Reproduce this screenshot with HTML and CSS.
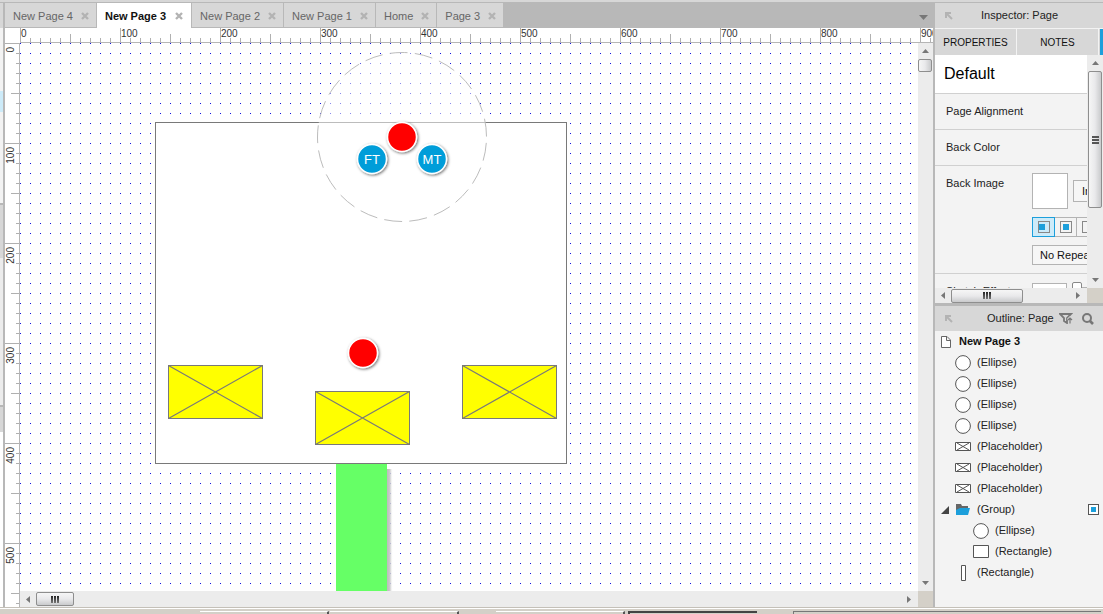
FILE: index.html
```html
<!DOCTYPE html>
<html lang="en">
<head>
<meta charset="utf-8">
<title>Page Editor</title>
<link rel="stylesheet" href="styles.css">
</head>
<body>
<div class="app">
  <div class="topline"></div>
  <div class="workspace">
    <div class="edge">
      <i class="edge-head"></i><i class="edge-plain"></i><i class="edge-selected"></i><i class="edge-fill"></i>
      <i class="edge-line"></i><i class="edge-head edge-tall"></i><i class="edge-middle"></i>
      <i class="edge-line"></i><i class="edge-head"></i><i class="edge-rest"></i>
    </div>

    <main class="editor">
      <nav class="tabs">
        <div class="tab"><span>New Page 4</span><button class="close" aria-label="Close New Page 4"><svg width="8" height="8"><path d="M1 1L7 7M7 1L1 7"/></svg></button></div>
        <div class="tab active"><span>New Page 3</span><button class="close" aria-label="Close New Page 3"><svg width="8" height="8"><path d="M1 1L7 7M7 1L1 7"/></svg></button></div>
        <div class="tab"><span>New Page 2</span><button class="close" aria-label="Close New Page 2"><svg width="8" height="8"><path d="M1 1L7 7M7 1L1 7"/></svg></button></div>
        <div class="tab"><span>New Page 1</span><button class="close" aria-label="Close New Page 1"><svg width="8" height="8"><path d="M1 1L7 7M7 1L1 7"/></svg></button></div>
        <div class="tab"><span>Home</span><button class="close" aria-label="Close Home"><svg width="8" height="8"><path d="M1 1L7 7M7 1L1 7"/></svg></button></div>
        <div class="tab"><span>Page 3</span><button class="close" aria-label="Close Page 3"><svg width="8" height="8"><path d="M1 1L7 7M7 1L1 7"/></svg></button></div>
        <button class="tab-menu" aria-label="All tabs"><svg width="9" height="5"><path d="M0 0H9L4.500 5Z" fill="#777"/></svg></button>
      </nav>

      <div class="stage">
        <svg class="ruler-top" width="100%" height="15">
          <defs><pattern id="ticksH" width="100" height="15" patternUnits="userSpaceOnUse">
            <path d="M.5 0V15M50.500 6V15M10.500 10V15M20.500 10V15M30.500 10V15M40.500 10V15M60.500 10V15M70.500 10V15M80.500 10V15M90.500 10V15" stroke="#b0b0b0"/>
          </pattern></defs>
          <rect width="100%" height="15" fill="url(#ticksH)"/>
          <path d="M0 14.500H3000" stroke="#b5b5b5"/>
          <g class="ruler-text">
            <text x="1" y="9">0</text><text x="101" y="9">100</text><text x="201" y="9">200</text><text x="301" y="9">300</text><text x="401" y="9">400</text>
            <text x="501" y="9">500</text><text x="601" y="9">600</text><text x="701" y="9">700</text><text x="801" y="9">800</text><text x="901" y="9">900</text>
          </g>
        </svg>

        <svg class="ruler-side" width="15" height="100%">
          <defs><pattern id="ticksV" width="15" height="100" patternUnits="userSpaceOnUse">
            <path d="M0 .5H15M6 50.500H15M11 10.500H15M11 20.500H15M11 30.500H15M11 40.500H15M11 60.500H15M11 70.500H15M11 80.500H15M11 90.500H15" stroke="#b0b0b0"/>
          </pattern></defs>
          <rect width="15" height="100%" fill="url(#ticksV)"/>
          <path d="M14.500 0V2000" stroke="#b5b5b5"/>
          <g class="ruler-text" text-anchor="end">
            <text transform="translate(9 4) rotate(-90)">0</text>
            <text transform="translate(9 104) rotate(-90)">100</text>
            <text transform="translate(9 204) rotate(-90)">200</text>
            <text transform="translate(9 304) rotate(-90)">300</text>
            <text transform="translate(9 404) rotate(-90)">400</text>
            <text transform="translate(9 504) rotate(-90)">500</text>
          </g>
        </svg>

        <div class="canvas">
          <svg width="100%" height="100%">
            <defs>
              <pattern id="grid" width="10" height="10" patternUnits="userSpaceOnUse"><rect width="1" height="1" fill="#1010e0"/></pattern>
              <filter id="drop" x="-30%" y="-30%" width="170%" height="170%"><feDropShadow dx="1" dy="1" stdDeviation="1.500" flood-color="#000" flood-opacity=".6"/></filter>
              <linearGradient id="fade"><stop offset="0" stop-color="#bbb"/><stop offset=".5" stop-color="#ccc"/><stop offset="1" stop-color="#fff" stop-opacity="0"/></linearGradient>
              <g id="placeholder"><rect x=".5" y=".5" width="94" height="53" fill="#ff0" stroke="#797979"/><path d="M.5 .5L94.500 53.500M94.500 .5L.5 53.500" stroke="#797979" stroke-width="1.200"/></g>
            </defs>
            <rect width="100%" height="100%" fill="url(#grid)"/>
            <rect x="367" y="426" width="6" height="200" fill="url(#fade)"/>
            <rect x="316" y="420" width="51" height="200" fill="#6f6"/>
            <rect x="135.500" y="79.500" width="411" height="341" fill="#fff" stroke="#797979"/>
            <circle cx="382" cy="94" r="84.500" fill="#fff" fill-opacity=".5" stroke="#bcbcbc" stroke-dasharray="18 7.280" stroke-dashoffset="-6"/>
            <g filter="url(#drop)" stroke="#fff" stroke-width="1.500">
              <circle cx="382" cy="94" r="14.500" fill="#f00"/>
              <circle cx="352" cy="116" r="14.500" fill="#009dd9"/>
              <circle cx="412" cy="116" r="14.500" fill="#009dd9"/>
              <circle cx="343" cy="310" r="14.500" fill="#f00"/>
            </g>
            <g class="node-text"><text x="352" y="121">FT</text><text x="412" y="121">MT</text></g>
            <use href="#placeholder" x="148" y="322"/>
            <use href="#placeholder" x="295" y="348"/>
            <use href="#placeholder" x="442" y="322"/>
          </svg>
        </div>

        <div class="vbar canvas-v">
          <svg width="7" height="4"><path d="M0 4L3.500 0L7 4Z"/></svg>
          <div class="thumb small"></div>
          <svg class="last" width="7" height="4"><path d="M0 0H7L3.500 4Z"/></svg>
        </div>
        <div class="hbar canvas-h">
          <svg width="4" height="7"><path d="M4 0V7L0 3.500Z"/></svg>
          <div class="thumb medium"><i></i><i></i><i></i></div>
          <svg class="last" width="4" height="7"><path d="M0 0V7L4 3.500Z"/></svg>
        </div>
        <div class="corner canvas-corner"></div>
      </div>
    </main>

    <aside class="side">
      <section class="inspector">
        <header class="panel-head">
          <svg class="pin" width="8" height="8"><path d="M1 6V1H6M1 1L7 7"/></svg>
          <h2>Inspector: Page</h2>
        </header>
        <div class="panel-tabs"><button>PROPERTIES</button><button>NOTES</button><i></i></div>
        <div class="scroller">
          <div class="props">
            <div class="row title">Default</div>
            <div class="row">Page Alignment</div>
            <div class="row">Back Color</div>
            <div class="row image-row">
              <span class="label">Back Image</span>
              <div class="fields">
                <div class="line"><div class="preview"></div><button class="field">Import</button></div>
                <div class="line aligns">
                  <button class="on" aria-label="Align left"><svg width="12" height="12"><rect x=".5" y=".5" width="11" height="11"/><path d="M1 3H7V9H1Z"/></svg></button>
                  <button aria-label="Align center"><svg width="12" height="12"><rect x=".5" y=".5" width="11" height="11"/><path d="M3 3H9V9H3Z"/></svg></button>
                  <button aria-label="Align right"><svg width="12" height="12"><rect x=".5" y=".5" width="11" height="11"/><path d="M5 3H11V9H5Z"/></svg></button>
                </div>
                <select class="field repeat" aria-label="Repeat"><option>No Repeat</option></select>
              </div>
            </div>
            <div class="row sketch-row">
              <label class="label" for="sketch">Sketch Effects</label>
              <div class="line sketch"><input id="sketch" type="text"><div class="slider"><i></i></div></div>
            </div>
          </div>
          <div class="vbar">
            <svg width="7" height="4"><path d="M0 4L3.500 0L7 4Z"/></svg>
            <div class="thumb tall"><i></i><i></i><i></i></div>
            <svg class="last" width="7" height="4"><path d="M0 0H7L3.500 4Z"/></svg>
          </div>
          <div class="hbar">
            <svg width="4" height="7"><path d="M4 0V7L0 3.500Z"/></svg>
            <div class="thumb wide"><i></i><i></i><i></i></div>
            <svg class="last" width="4" height="7"><path d="M0 0V7L4 3.500Z"/></svg>
          </div>
          <div class="corner"></div>
        </div>
      </section>

      <section class="outline">
        <header class="panel-head">
          <svg class="pin" width="8" height="8"><path d="M1 6V1H6M1 1L7 7"/></svg>
          <h2>Outline: Page</h2>
          <button aria-label="Sort and filter"><svg width="14" height="11"><path d="M1 1H12L8 5V10L5 8V5Z" fill="none" stroke="#777" stroke-width="1.800"/><path d="M11 11V5M9 7L11 5L13 7" fill="none" stroke="#d7d7d7" stroke-width="3"/><path d="M11 10.500V5M9 7L11 5L13 7" fill="none" stroke="#777" stroke-width="1.200"/></svg></button>
          <button aria-label="Search"><svg width="12" height="12"><circle cx="5" cy="5" r="4" fill="none" stroke="#777" stroke-width="2"/><path d="M8 8L11 11" stroke="#777" stroke-width="2.600"/></svg></button>
        </header>
        <ul class="tree">
          <li class="root"><svg width="10" height="12"><path d="M.5 .5H6L9.500 4V11.500H.5ZM5.500 .5V4.500H9.500" fill="#fff" stroke="#666"/></svg><b>New Page 3</b></li>
          <li><svg width="16" height="16"><circle cx="8" cy="8" r="7.400"/></svg>(Ellipse)</li>
          <li><svg width="16" height="16"><circle cx="8" cy="8" r="7.400"/></svg>(Ellipse)</li>
          <li><svg width="16" height="16"><circle cx="8" cy="8" r="7.400"/></svg>(Ellipse)</li>
          <li><svg width="16" height="16"><circle cx="8" cy="8" r="7.400"/></svg>(Ellipse)</li>
          <li><svg width="16" height="9"><path d="M.5 .5H15.500V8.500H.5ZM2 1L14 8M14 1L2 8"/></svg>(Placeholder)</li>
          <li><svg width="16" height="9"><path d="M.5 .5H15.500V8.500H.5ZM2 1L14 8M14 1L2 8"/></svg>(Placeholder)</li>
          <li><svg width="16" height="9"><path d="M.5 .5H15.500V8.500H.5ZM2 1L14 8M14 1L2 8"/></svg>(Placeholder)</li>
          <li class="group"><button aria-label="Collapse group"><svg width="8" height="8"><path class="arrow" d="M8 0V8H0Z"/></svg></button><svg width="16" height="12"><path class="folder-back" d="M1 0H6L7 2H13V10H1Z"/><path class="folder-front" d="M1 6L5 4H15L13 11H1Z"/></svg>(Group)<svg class="flag" width="11" height="11"><rect x=".5" y=".5" width="10" height="10"/><path d="M3 3H8V8H3Z"/></svg></li>
          <li class="child"><svg width="16" height="16"><circle cx="8" cy="8" r="7.400"/></svg>(Ellipse)</li>
          <li class="child"><svg width="16" height="13"><path d="M.5 .5H15.500V12.500H.5Z"/></svg>(Rectangle)</li>
          <li><svg width="16" height="16"><path d="M6.500 .5H10.500V15.500H6.500Z"/></svg>(Rectangle)</li>
        </ul>
      </section>
    </aside>
  </div>
  <footer class="taskbar">
    <i class="task"></i><i class="task"></i><i class="task spaced"></i><i class="task pressed"></i><i class="tray"></i>
  </footer>
</div>
</body>
</html>
```
FILE: styles.css
```css
* { box-sizing: border-box; }
body { margin: 0; font: 11px/13px "Liberation Sans", Arial, sans-serif; color: #222; background: #d4d0c8; }
button { border: 0; padding: 0; background: none; font: inherit; color: inherit; display: flex; align-items: center; justify-content: center; }
h2 { margin: 0; font: inherit; }
svg { display: block; flex: none; }
.app { display: flex; flex-direction: column; height: 100vh; overflow: hidden; }
.topline { height: 3px; background: #d7d7d7; border-bottom: 1px solid #b8b8b8; flex: none; }
.workspace { display: flex; flex: 1; min-height: 0; background: #f3f3f3; }

.edge { width: 5px; border-right: 2px solid #b8b8b8; display: flex; flex-direction: column; flex: none; }
.edge i { flex: none; }
.edge-head { height: 25px; background: #d7d7d7; }
.edge-tall { height: 53px; }
.edge-plain { height: 63px; background: #f3f3f3; }
.edge-selected { height: 21px; background: #cdebf9; }
.edge-fill { height: 91px; }
.edge-line { height: 2px; background: #b8b8b8; }
.edge-middle { height: 147px; background: #ececec; }
.edge .edge-rest { flex: 1; background: #fff; }

.editor { flex: 1; min-width: 0; display: flex; flex-direction: column; }
.tabs { display: flex; height: 25px; background: #b8b8b8; flex: none; color: #666; }
.tab { display: flex; align-items: center; gap: 8px; padding: 2px 7px 0 8px; height: 24px; background: #d7d7d7; margin-right: 1px; white-space: nowrap; }
.tab.active { height: 25px; gap: 9px; padding: 1px 8px 0; background: #fff; color: #111; font-weight: bold; }
.close svg { fill: none; stroke: #b3b3b3; stroke-width: 2.4; }
.tab-menu { margin: 3px 5px 0 auto; }
.stage { flex: 1; min-height: 0; display: grid; grid-template: 15px minmax(0, 1fr) 16px / 15px minmax(0, 1fr) 15px; background: #fff; }
.ruler-top { grid-area: 1 / 2 / 2 / 4; }
.ruler-side { grid-area: 2 / 1 / 4 / 2; }
.ruler-text { font-size: 10px; fill: #333; }
.canvas { grid-area: 2 / 2 / 3 / 3; overflow: hidden; }
.node-text { font-size: 13px; fill: #fff; text-anchor: middle; }
.canvas-v { grid-area: 2 / 3 / 3 / 4; }
.canvas-h { grid-area: 3 / 2 / 4 / 3; }
.corner { background: #d4d0c8; }
.canvas-corner { grid-area: 3 / 3 / 4 / 4; }

.vbar, .hbar { display: flex; align-items: center; gap: 6px; background: #ececec; fill: #777; }
.vbar { flex-direction: column; padding: 6px 0; }
.hbar { padding: 0 7px 0 6px; }
.last { margin: auto 0 0; }
.hbar .last { margin: 0 0 0 auto; }
.thumb { flex: none; border: 1px solid #8e8e8e; border-radius: 2px; display: flex; align-items: center; justify-content: center; gap: 1px; background: linear-gradient(#f6f6f6, #e9e9eb 50%, #c9cacc); }
.vbar .thumb { flex-direction: column; width: 14px; background: linear-gradient(90deg, #f6f6f6, #e9e9eb 50%, #c9cacc); }
.canvas-v .thumb { align-self: flex-start; }
.hbar .thumb { height: 14px; }
.thumb i { width: 2px; height: 7px; background: linear-gradient(#222, #777); }
.vbar .thumb i { width: 7px; height: 2px; background: #555; }
.small { height: 13px; }
.medium { width: 38px; }
.tall { height: 137px; }
.wide { width: 72px; }

.side { width: 170px; flex: none; border-left: 2px solid #b8b8b8; display: flex; flex-direction: column; }
.inspector { height: 303px; border-bottom: 3px solid #b8b8b8; display: flex; flex-direction: column; flex: none; }
.panel-head { height: 25px; background: #d7d7d7; display: flex; align-items: center; padding: 0 10px; flex: none; }
.pin { fill: none; stroke: #b3b3b3; stroke-width: 2; }
.inspector h2 { margin-left: 28px; }
.panel-tabs { display: flex; height: 27px; padding-top: 1px; gap: 1px; background: #f3f3f3; color: #111; font-size: 10px; flex: none; }
.panel-tabs button { flex: 1; background: #d7d7d7; }
.panel-tabs i { width: 4px; border-left: 1px solid #d7d7d7; background: #1c9fdb; }
.scroller { flex: 1; min-height: 0; display: grid; grid-template: minmax(0, 1fr) 15px / minmax(0, 1fr) 16px; }
.props { overflow: hidden; }
.row { height: 36px; padding: 11px; border-bottom: 1px solid #d0d0d0; white-space: nowrap; }
.title { height: 39px; padding: 10px 9px; background: #fff; color: #000; font-size: 16px; line-height: 18px; }
.image-row { display: flex; height: 108px; padding-top: 7px; }
.label { width: 86px; flex: none; padding-top: 4px; }
.fields { display: flex; flex-direction: column; gap: 8px; }
.line { display: flex; align-items: center; gap: 5px; }
.preview { width: 36px; height: 36px; flex: none; border: 1px solid #b3b3b3; background: #fff; }
.field { width: 84px; height: 20px; flex: none; border: 1px solid #b3b3b3; border-radius: 0; background: #f6f6f6; justify-content: flex-start; padding: 0 8px; font: inherit; color: #111; appearance: none; }
.line .field { height: 22px; }
.repeat { padding: 0 7px; }
.aligns { gap: 0; }
.aligns button { width: 23px; height: 20px; flex: none; margin-right: -1px; border: 1px solid #b3b3b3; fill: #1c9fdb; }
.aligns rect { fill: none; stroke: #888; }
.aligns .on { position: relative; border-color: #1c9fdb; background: #cdebf9; }
.sketch-row { display: flex; }
.sketch-row .label { padding: 0; }
.sketch { align-items: flex-start; }
.sketch input { width: 35px; height: 20px; flex: none; margin-top: -2px; border: 1px solid #b3b3b3; background: #fff; }
.slider { width: 60px; flex: none; border-top: 1px solid #b3b3b3; margin-top: 2px; }
.slider i { display: block; width: 10px; height: 16px; margin-top: -6px; border: 1px solid #888; border-radius: 2px; background: #fff; }

.outline { flex: 1; }
.outline .panel-head { padding-right: 9px; }
.outline h2 { margin: 0 auto 0 34px; white-space: nowrap; }
.outline .panel-head button + button { margin-left: 9px; }
.tree { margin: 0; padding: 0; list-style: none; }
.tree li { display: flex; align-items: center; gap: 6px; height: 21px; padding-left: 20px; }
.tree svg { fill: #fff; stroke: #555; }
.tree .root { padding-left: 6px; gap: 8px; color: #111; }
.tree .child { padding-left: 38px; }
.tree .group { padding: 0 4px 0 6px; }
.tree .arrow { fill: #444; stroke: none; }
.tree .folder-back { fill: #666; stroke: none; }
.tree .folder-front { fill: #1c9fdb; stroke: none; }
.flag { margin-left: auto; }
.tree .flag path { fill: #1c9fdb; stroke: none; }

.taskbar { height: 7px; flex: none; border-top: 1px solid #c4c0b8; box-shadow: inset 0 1px #fff; display: flex; align-items: flex-end; padding: 0 2px 0 200px; background: #d4d0c8; }
.task { width: 129px; height: 3px; margin-right: 1px; border-top: 1px solid #fff; border-right: 2px solid #555; flex: none; }
.spaced { margin-left: 36px; }
.pressed { border: 0; border-top: 2px solid #444; border-left: 2px solid #444; margin: 0 33px 0 2px; }
.tray { flex: 1; height: 3px; margin-left: 3px; border-top: 1px solid #777; border-left: 1px solid #777; }
```
